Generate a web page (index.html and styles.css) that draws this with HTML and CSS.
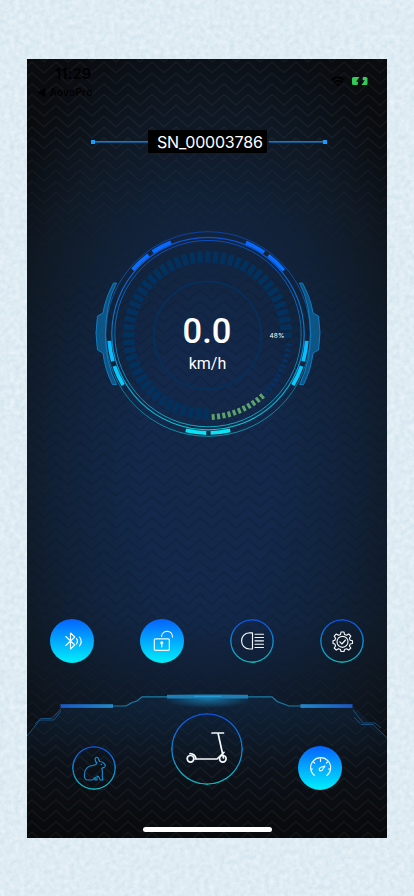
FILE: index.html
```html
<!DOCTYPE html>
<html>
<head>
    <meta charset="utf-8">
    <title>AovoPro</title>
    <meta name="viewport" content="width=device-width,initial-scale=1.0">
    <link rel="stylesheet" href="styles.css">
</head>
<body>
    <svg class="paper" width="414" height="896">
        <filter id="grain" x="0" y="0" width="100%" height="100%" color-interpolation-filters="sRGB">
            <feTurbulence type="fractalNoise" baseFrequency="0.2" numOctaves="4" seed="4"/>
            <feColorMatrix values="0.12 0 0 0 0.812  0.08 0 0 0 0.884  0.06 0 0 0 0.924  0 0 0 0 1"/>
        </filter>
        <rect width="414" height="896" filter="url(#grain)"/>
    </svg>
    <div class="phone">
        <svg class="pattern light" width="360" height="780">
            <defs>
                <pattern id="zigzag" x="-7" y="2.9" width="24" height="10.85" patternUnits="userSpaceOnUse">
                    <path d="M0 10.85L12 0L24 10.85M-2 1.8L0 0L2 -1.8M22 -1.8L24 0M0 0L1 -1M10 12.65L12 10.85L14 12.65" fill="none" stroke="#8795a5" stroke-opacity=".11"/>
                </pattern>
                <pattern id="zigzagDark" x="-7" y="2.9" width="24" height="10.85" patternUnits="userSpaceOnUse">
                    <path d="M0 10.85L12 0L24 10.85" fill="none" stroke="#071220" stroke-opacity=".28"/>
                </pattern>
            </defs>
            <rect width="360" height="780" fill="url(#zigzag)"/>
        </svg>
        <svg class="pattern dark" width="360" height="780">
            <rect width="360" height="780" fill="url(#zigzagDark)"/>
        </svg>

        <div class="status">
            <div class="status-left">
                <div class="time">11:29</div>
                <div class="back">◀ AovoPro</div>
            </div>
            <div class="status-right">
                <svg width="14" height="11" viewBox="0 0 14 11" fill="none" stroke="#000" stroke-width="1.9">
                    <path d="M.7 4Q7 -1.6 13.3 4M3 6.5Q7 3 11 6.5"/>
                    <path d="M5.2 8.2Q7 7 8.8 8.2L7 10.2z" fill="#000" stroke="none"/>
                </svg>
                <svg width="16" height="8" viewBox="0 0 16 8">
                    <path d="M1.5 0H7.5L4 4.7H6.2L5.5 8H1.5Q0 8 0 6.5V1.5Q0 0 1.5 0zM11 0H14Q15.500 0 15.500 1.500V6.500Q15.500 8 14 8H9.500L12.800 3.200H10.500z" fill="#32cb58"/>
                </svg>
            </div>
        </div>

        <div class="serial">
            <span class="line line-left"></span>
            <span class="serial-number">SN_00003786</span>
            <span class="line line-right"></span>
        </div>

        <svg class="gauge" width="230" height="210" viewBox="94 229 230 210">
            <defs>
                <linearGradient id="ring" gradientUnits="userSpaceOnUse" x1="0" y1="231" x2="0" y2="437">
                    <stop offset="0" stop-color="#0a4fd0"/>
                    <stop offset=".5" stop-color="#087cc4"/>
                    <stop offset="1" stop-color="#08c9d2"/>
                </linearGradient>
                <linearGradient id="bars" gradientUnits="userSpaceOnUse" x1="0" y1="240" x2="0" y2="434">
                    <stop offset="0" stop-color="#0868ff"/>
                    <stop offset=".2" stop-color="#0872ff"/>
                    <stop offset=".55" stop-color="#08baff"/>
                    <stop offset="1" stop-color="#08e4f5"/>
                </linearGradient>
            </defs>
            <g fill="none" stroke="url(#ring)">
                <circle cx="208" cy="334" r="102.3" stroke-opacity=".65"/>
                <circle cx="208" cy="333.6" r="96.2" stroke-width="1.2"/>
                <circle cx="208" cy="333.6" r="93.2" stroke-opacity=".85"/>
            </g>
            <g id="segments" fill="none" stroke="url(#bars)" stroke-width="3.8"></g>
            <circle cx="207.5" cy="335.4" r="53.7" fill="none" stroke="#06305c" stroke-width="1.8"/>
            <g id="ticks" fill="none"></g>
            <g fill="#0c77b5" fill-opacity=".6" stroke="#0d81c8" stroke-width=".9">
                <path d="M113.5 283Q105 299 103 313L97.5 316Q94.5 333 97.5 350L103 353Q105 370 112.5 384.5H116.5Q105.500 363 105.500 334Q105.500 304 116.500 283z"/>
                <path d="M302.500 283Q311 299 313 313L318.500 316Q321.500 333 318.500 350L313 353Q311 370 303.500 384.500H299.500Q310.500 363 310.500 334Q310.500 304 299.500 283z"/>
            </g>
            <text class="speed" x="207" y="343" text-anchor="middle">0.0</text>
            <text class="unit" x="207.500" y="369.300" text-anchor="middle">km/h</text>
            <text class="percent" x="277" y="338" text-anchor="middle">48%</text>
        </svg>

        <div class="controls">
            <button class="round filled">
                <svg width="44" height="44" viewBox="0 0 44 44">
                    <path d="M15.800 17.500L24.800 26L20.500 30V14L24.800 18L15.800 26.500M26.500 19.500Q28.500 22 26.500 25M29.500 18Q33 22.500 29.500 27"/>
                </svg>
            </button>
            <button class="round filled">
                <svg width="44" height="44" viewBox="0 0 44 44">
                    <rect x="14.300" y="19.800" width="15" height="11.500" rx="1"/>
                    <path d="M21.500 17.500C22 10.500 32.500 10.500 32.500 18M21.800 24.500V28"/>
                    <circle cx="21.800" cy="23.800" r="1" fill="#fff"/>
                </svg>
            </button>
            <button class="round">
                <svg width="44" height="44" viewBox="0 0 44 44">
                    <path d="M22.500 13.800V30H19.500C9 29.500 9 14.300 19.500 13.800z"/>
                    <path d="M25 15.200H33.500M25 18.500H33.500M25 21.800H33.500M25 25.200H33.500M25 28.500H33.500"/>
                </svg>
            </button>
            <button class="round">
                <svg width="44" height="44" viewBox="0 0 44 44">
                    <path d="M21 13H24L24.500 15.500L26.500 16.300L28.700 15L30.800 17.100L29.400 19.200L30.200 21.200L32.500 21.700V24.500L30.200 25L29.400 27L30.800 29L28.700 31.100L26.500 29.800L24.500 30.500L24 32.500H21L20.500 30.500L18.500 29.800L16.300 31.100L14.200 29L15.600 27L14.800 25L13 24.500V21.700L14.800 21.200L15.600 19.200L14.200 17.100L16.300 15L18.500 16.300L20.500 15.500z"/>
                    <circle cx="22.500" cy="22.800" r="5.500"/>
                    <path d="M19.800 22.800L21.900 25L25.500 21"/>
                </svg>
            </button>
        </div>

        <div class="dock">
            <svg class="dock-frame" width="360" height="145" viewBox="27 693 360 145">
                <defs>
                    <linearGradient id="edge" x1="0" x2="1">
                        <stop offset="0" stop-color="#1a58c4"/>
                        <stop offset="1" stop-color="#2289c8"/>
                    </linearGradient>
                    <linearGradient id="edgeBack" x1="1" x2="0">
                        <stop offset="0" stop-color="#1a58c4"/>
                        <stop offset="1" stop-color="#2289c8"/>
                    </linearGradient>
                    <linearGradient id="shade" x1="0" y1="0" x2="0" y2="1">
                        <stop offset="0" stop-color="#103050" stop-opacity=".4"/>
                        <stop offset=".5" stop-color="#103050" stop-opacity="0"/>
                    </linearGradient>
                    <radialGradient id="glow">
                        <stop offset="0" stop-color="#1b86bd" stop-opacity=".75"/>
                        <stop offset="1" stop-color="#1b86bd" stop-opacity="0"/>
                    </radialGradient>
                </defs>
                <path d="M61 705H126L142 695.500H272L289 705H353L372 723L387 737V838H27V734L40 719H52z" fill="url(#shade)"/>
                <ellipse cx="208" cy="698" rx="44" ry="9" fill="url(#glow)"/>
                <g fill="none" stroke="#1d7ba8" stroke-width="1.200">
                    <path d="M112 705H126L132 701.500L137 700L142 695.800H272L277 700.500L281 702L289 705H301"/>
                    <path d="M27 735L40 719H54L61 710M35 723L41 717.500H52L61 708" stroke="#1a5588" stroke-width=".9"/>
                    <path d="M387 737L373 723.500H361L354 716M381 727L375 722H363L353 709" stroke="#1a5588" stroke-width=".9"/>
                </g>
                <rect x="60.500" y="703.200" width="52.500" height="3.700" fill="url(#edge)"/>
                <rect x="300.500" y="703.200" width="52" height="3.700" fill="url(#edgeBack)"/>
                <rect x="167" y="693.800" width="81" height="3.700" fill="#1d7fb6"/>
                <path d="M194 695.300H221" stroke="#28a5dc"/>
            </svg>
            <div class="modes">
                <button class="round rabbit">
                    <svg width="44" height="44" viewBox="0 0 44 44">
                        <path d="M24.800 17C22.500 14.500 22.800 11.800 24.300 11.300C26.300 10.800 27 13.500 27.600 15.500C30.500 15.500 33.500 18 33.300 20C33 21.700 30.500 21.500 29.800 22.500C31.300 26 29.300 29 31 34H28.300L26.500 30.500L25 30V34H23L23.300 31.300C21.500 32 23 34 19.500 34H15.500C12.500 34 13.500 32 12.500 31.500C11.800 25 14.500 20.500 20 19.500C22.500 19 24.500 19.300 24.800 17zM29 18.400H29.500"/>
                    </svg>
                </button>
                <button class="round scooter">
                    <svg width="72" height="72" viewBox="0 0 72 72">
                        <path d="M41 20H52.500M47 20L52.500 45M24 46H46L53 39.300"/>
                        <circle cx="19.500" cy="45.800" r="3.300"/>
                        <circle cx="51.800" cy="45.800" r="3.300"/>
                        <path d="M19 40.700Q24 41 25 45.500"/>
                    </svg>
                </button>
                <button class="round filled">
                    <svg width="44" height="44" viewBox="0 0 44 44">
                        <path d="M16.500 29.500A10 10 0 1 1 28.800 29.500M22.500 12.800V15.500M15.500 16L16.700 17.200M29.500 16L28.300 17.200M12.700 23H14.500M32.300 23H30.500"/>
                        <path d="M27 20L22.500 21.500C20 23 21.500 26 24 24.500z"/>
                    </svg>
                </button>
            </div>
        </div>
        <div class="home-bar"></div>
    </div>

    <script>
        var svgNS = 'http://www.w3.org/2000/svg';

        function point(cx, cy, r, deg) {
            var a = deg * Math.PI / 180;
            return (cx + r * Math.cos(a)).toFixed(2) + ' ' + (cy + r * Math.sin(a)).toFixed(2);
        }
        function addPath(parent, d) {
            var path = document.createElementNS(svgNS, 'path');
            path.setAttribute('d', d);
            parent.appendChild(path);
            return path;
        }

        // bright segments between the rings: [from, to] in degrees
        var segments = [[220.5, 233], [236, 248], [292.5, 304.5], [307.5, 320],
            [164, 176], [149, 161], [4, 16], [19, 31], [91, 103], [77, 88.500]];
        var segGroup = document.getElementById('segments');
        for (var i = 0; i < segments.length; i++) {
            addPath(segGroup, 'M' + point(208, 334, 99, segments[i][0]) + 'A99 99 0 0 1 ' + point(208, 334, 99, segments[i][1]));
        }

        var ticks = document.getElementById('ticks');
        // speed ticks
        for (var i = 0; i < 49; i++) {
            var deg = 91 + i * 5.6;
            var tick = addPath(ticks, 'M' + point(207.5, 335.5, 73, deg) + 'L' + point(207.5, 335.5, 84.5, deg));
            tick.setAttribute('class', 'tick-speed');
        }
        // battery ticks
        for (var i = 0; i < 22; i++) {
            var deg = 86 - i * 3.78;
            var tick = addPath(ticks, 'M' + point(207.5, 335.5, 78.8, deg) + 'L' + point(207.5, 335.5, 84.5, deg));
            tick.setAttribute('class', i < 11 ? 'tick-battery on' : 'tick-battery');
        }
    </script>
</body>
</html>
```
FILE: styles.css
```css
*{
    box-sizing: border-box;
}

body{
    margin: 0;
    height: 896px;
    padding: 59px 27px 0;
    overflow: hidden;
    background: #dceaf2;
    color: #fff;
    font-family: Inter, "Liberation Sans", sans-serif;
}

svg{
    display: block;
}

.paper{
    position: absolute;
    top: 0;
    left: 0;
}

.phone{
    position: relative;
    display: flex;
    flex-direction: column;
    width: 360px;
    height: 779px;
    overflow: hidden;
    background:
        linear-gradient(rgba(7,9,13,.3) 0, rgba(10,14,20,0) 20%, rgba(10,14,20,0) 72%, rgba(11,14,19,.8) 92%, #08090b 100%),
        radial-gradient(ellipse 255px 480px at 50% 53%, #15294a 0, #13284a 28%, #11233c 52%, #101a26 78%, #0a0c0f 100%);
}

.pattern{
    position: absolute;
    top: 0;
    left: 0;
}

.pattern.light{
    -webkit-mask-image: linear-gradient(#000 10%, rgba(0,0,0,.1) 30%, rgba(0,0,0,.1) 72%, #000 88%);
    mask-image: linear-gradient(#000 10%, rgba(0,0,0,.1) 30%, rgba(0,0,0,.1) 72%, #000 88%);
}

.pattern.dark{
    -webkit-mask-image: linear-gradient(transparent 12%, #000 32%, #000 75%, transparent 88%);
    mask-image: linear-gradient(transparent 12%, #000 32%, #000 75%, transparent 88%);
}

.status,
.serial,
.gauge,
.controls,
.dock,
.home-bar{
    position: relative;
    flex: none;
}

.status{
    display: flex;
    justify-content: space-between;
    height: 71px;
    padding: 7px 19px 0 10px;
    color: #000;
}

.time{
    padding-left: 18px;
    font-size: 14.5px;
    font-weight: 600;
    line-height: 16px;
    letter-spacing: .2px;
}

.back{
    margin-top: 3px;
    font-size: 10px;
    font-weight: 500;
    line-height: 14px;
    letter-spacing: .35px;
}

.status-right{
    display: flex;
    gap: 7px;
    align-items: center;
    height: 30px;
}

/* serial number */
.serial{
    display: flex;
    align-items: center;
    height: 23px;
    padding-left: 64px;
}

.line{
    display: flex;
    align-items: center;
    height: 4px;
    background: linear-gradient(transparent 1px, #1578c2 1px, #1578c2 2px, #11558a 2px, #11558a 3px, transparent 3px);
}

.line:before{
    content: "";
    width: 4px;
    height: 4px;
    background: #179cff;
}

.line-left{
    width: 57px;
}

.line-right{
    width: 58px;
    margin-left: 2px;
    justify-content: flex-end;
}

.serial-number{
    width: 119px;
    height: 23px;
    padding-left: 9px;
    background: #000;
    font-size: 16px;
    line-height: 24px;
    letter-spacing: -.2px;
    white-space: nowrap;
}

/* gauge */
.gauge{
    margin: 76px 0 0 67px;
}

.tick-speed{
    stroke: #03315e;
    stroke-width: 5.2;
}

.tick-battery{
    stroke: #06305f;
    stroke-width: 3;
}

.tick-battery.on{
    stroke: #5da46c;
}

.gauge text{
    fill: #fff;
}

.gauge .speed,
.gauge .unit{
    font-family: Roboto, sans-serif;
}

.speed{
    font-size: 34.5px;
    font-weight: 500;
}

.unit{
    font-size: 16px;
}

.percent{
    font-size: 6.5px;
    letter-spacing: .2px;
}

/* round buttons */
.controls{
    display: flex;
    justify-content: space-between;
    margin-top: 180px;
    padding: 0 23px;
}

.round{
    display: grid;
    width: 44px;
    height: 44px;
    padding: 0;
    border: 0;
    border-radius: 50%;
    background: none;
}

.round:before,
.round svg{
    grid-area: 1 / 1;
}

/* gradient outline with a see-through middle */
.round:before{
    content: "";
    width: 100%;
    height: 100%;
    border-radius: 50%;
    background: linear-gradient(#0a50dc, #0ab5b9);
    -webkit-mask: radial-gradient(closest-side, transparent calc(100% - 2px), #000 calc(100% - 1.2px));
    mask: radial-gradient(closest-side, transparent calc(100% - 2px), #000 calc(100% - 1.2px));
}

.round.filled{
    background: linear-gradient(#0562ff, #00f0fa);
}

.round.filled:before{
    display: none;
}

.round svg{
    fill: none;
    stroke: #f3f8fb;
    stroke-width: 1.15;
    stroke-linecap: round;
    stroke-linejoin: round;
}

/* bottom dock */
.dock{
    height: 133px;
    margin-top: 31px;
}

.dock-frame{
    position: absolute;
    top: 0;
    left: 0;
}

.modes{
    position: relative;
    display: flex;
    justify-content: space-between;
    align-items: flex-end;
    padding: 19px 45px 0;
}

.modes .round{
    margin-bottom: -5px;
}

.modes .rabbit svg{
    stroke: #168ccf;
}

.modes .scooter{
    width: 72px;
    height: 72px;
    margin-bottom: 0;
}

.modes .scooter svg{
    stroke-width: 1.7;
}

.home-bar{
    width: 129px;
    height: 5px;
    margin: 0 0 0 116px;
    border-radius: 3px;
    background: #fff;
}
```
